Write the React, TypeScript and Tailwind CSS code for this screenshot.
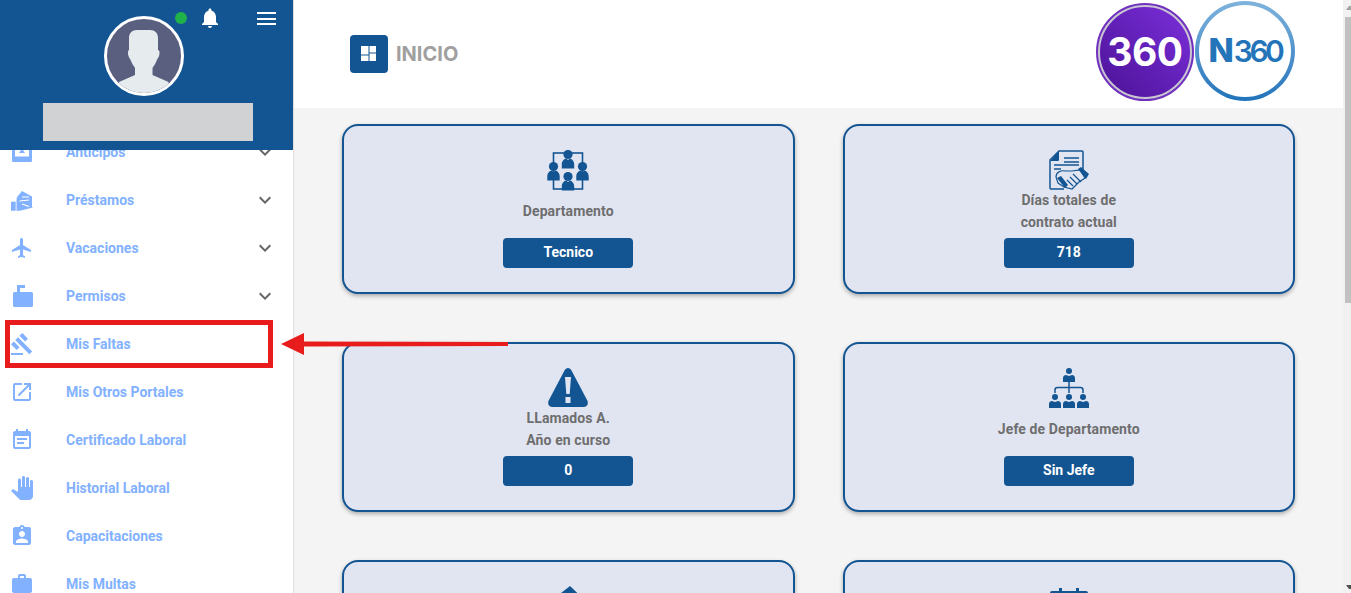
import React from "react";
import { MdExpandMore, MdFlight, MdGavel, MdOpenInNew, MdEventNote, MdPanTool, MdAssignmentInd, MdWork, MdNotifications } from "react-icons/md";

const blue = "#135592";
const cardBg = "#e1e5f2";

const PhotoIcon = () => (
  <svg viewBox="0 0 24 24" width="24" height="24" fill="#82b1ff">
    <path fillRule="evenodd" d="M3.500 2h17A1.500 1.500 0 0 1 22 3.500v17a1.500 1.500 0 0 1-1.500 1.500h-17A1.500 1.500 0 0 1 2 20.500v-17A1.500 1.500 0 0 1 3.500 2zM5 5v11.500h14V5H5zm7 3.500 3 4.500H9z" />
  </svg>
);
const LoanIcon = () => (
  <svg viewBox="0 0 24 24" width="24" height="24" fill="#82b1ff">
    <path d="M1 13.700h4.700v9H1z" />
    <path d="M7 9 12 3l10 5.500V19l1 .5-13 3.200H6.500V12z" />
    <path d="M12 9h7M9.500 13l9.500-1M12 16l7 2.500" stroke="#ffffff" strokeWidth="1.200" fill="none" />
  </svg>
);
const TabCase = () => (
  <svg viewBox="0 0 24 24" width="24" height="24" fill="#82b1ff">
    <path d="M7 1h8v3h-5v4h11.500A1.500 1.500 0 0 1 23 9.500v12a1.500 1.500 0 0 1-1.500 1.500h-17A1.500 1.500 0 0 1 3 21.500v-12A1.500 1.500 0 0 1 4.500 8H7z" />
  </svg>
);

type Item = { label: string; icon: React.ReactNode; more?: boolean };
const ic = "text-[24px]";
const items: Item[] = [
  { label: "Anticipos", icon: <PhotoIcon />, more: true },
  { label: "Préstamos", icon: <LoanIcon />, more: true },
  { label: "Vacaciones", icon: <MdFlight className={ic} />, more: true },
  { label: "Permisos", icon: <TabCase />, more: true },
  { label: "Mis Faltas", icon: <MdGavel className={ic} /> },
  { label: "Mis Otros Portales", icon: <MdOpenInNew className={ic} /> },
  { label: "Certificado Laboral", icon: <MdEventNote className={ic} /> },
  { label: "Historial Laboral", icon: <MdPanTool className={ic} /> },
  { label: "Capacitaciones", icon: <MdAssignmentInd className={ic} /> },
  { label: "Mis Multas", icon: <MdWork className={ic} /> },
];

const Person = ({ x, y }: { x: number; y: number }) => (
  <g transform={`translate(${x} ${y})`}>
    <circle cx="0" cy="0" r="4.600" />
    <path d="M-6.200 14V10C-6.200 6-3.500 4.500-2 4L0 5.500 2 4c1.500.5 4.200 2 4.200 6v4z" />
  </g>
);

const DeptIcon = () => (
  <svg width="42" height="42" viewBox="0 0 42 42" fill={blue}>
    <rect x="6.500" y="3" width="29" height="36" fill="none" stroke={blue} strokeWidth="1.600" />
    <Person x={21} y={4.500} />
    <Person x={6.500} y={16.500} />
    <Person x={35.500} y={16.500} />
    <Person x={21} y={26.500} />
  </svg>
);
const DocIcon = () => (
  <svg width="42" height="42" viewBox="0 0 42 42">
    <path d="M35 20V2a1 1 0 0 0-1-1H11L2 10v28a1 1 0 0 0 1 1h13" fill="none" stroke={blue} strokeWidth="1.500" />
    <path d="M2 11h8a1 1 0 0 0 1-1V1z" fill={blue} />
    <path d="M16 8h15M16 12h15M6 15h25M6 19h7" stroke={blue} strokeWidth="1.500" />
    <path d="M8 27c0-5 5-7 10-6l6 0 8-1 5 8-6 4-7 7-8-2-6-4z" fill={cardBg} stroke={blue} strokeWidth="1.200" />
    <path d="M30 19l3-2 8 7-3 5z" fill={blue} />
    <path d="M9 28l4-2 7 9-3 3z" fill={blue} />
    <path d="M22 27l7 7M19 30l6 6M25 24l8 8" stroke={blue} strokeWidth="1.200" fill="none" />
  </svg>
);
const WarnIcon = () => (
  <svg width="42" height="42" viewBox="0 0 42 42">
    <path d="M21 0c1.500 0 2.700 1 3.500 2.500l15.800 30c1.500 3.200-.3 6.500-3.500 6.500H5.200c-3.200 0-5-3.300-3.500-6.500l15.800-30C18.300 1 19.500 0 21 0z" fill={blue} />
    <path d="M18 9h6l-1.300 17h-3.400zM18.500 29h5v6h-5z" fill={cardBg} />
  </svg>
);
const OrgIcon = () => (
  <svg width="42" height="42" viewBox="0 0 42 42" fill={blue}>
    <circle cx="21" cy="3" r="3" />
    <path d="M15 14V10c0-2 1.500-3 3-3l3 1 3-1c1.500 0 3 1 3 3v4z" />
    <path d="M21 14v11M7 25v-3c0-2 1-2.500 2.500-2.500h23c1.500 0 2.500.5 2.500 2.500v3" fill="none" stroke={blue} strokeWidth="1.500" />
    <circle cx="7" cy="29" r="3" />
    <circle cx="21" cy="29" r="3" />
    <circle cx="35" cy="29" r="3" />
    <path d="M1 40v-4c0-2 1.500-3 3-3l3 1 3-1c1.500 0 3 1 3 3v4zM15 40v-4c0-2 1.500-3 3-3l3 1 3-1c1.500 0 3 1 3 3v4zM29 40v-4c0-2 1.500-3 3-3l3 1 3-1c1.500 0 3 1 3 3v4z" />
  </svg>
);
const HouseIcon = () => (
  <svg width="42" height="42" viewBox="0 0 42 42" fill={blue}>
    <path d="M23 0 42 18H0z" />
    <rect x="6" y="18" width="30" height="22" />
  </svg>
);
const CalIcon = () => (
  <svg width="42" height="42" viewBox="0 0 42 42" fill={blue}>
    <rect x="11" y="2" width="3" height="6" />
    <rect x="28" y="2" width="3" height="6" />
    <rect x="2" y="5" width="38" height="35" rx="2" />
  </svg>
);
const WindowIcon = () => (
  <svg width="16" height="16" viewBox="0 0 16 16" fill="#ffffff">
    <path d="M0 0h7.500v8.500H0zM0 9.500h7.500V15H0zM8.500 0H15v6.500H8.500zM8.500 7.500H15V15H8.500z" />
  </svg>
);

const Card = ({ icon, label, value }: { icon: React.ReactNode; label?: React.ReactNode; value?: string }) => (
  <div className="h-[170px] rounded-[16px] border-2 border-[#135592] bg-[#e1e5f2] shadow-[0_2px_4px_rgba(0,0,0,0.3)] pt-[24px] flex flex-col items-center">
    <div className="h-[39px] flex items-start justify-center">{icon}</div>
    <div className="h-[44px] flex items-center text-center text-[14px] leading-[22px] font-bold tracking-[0.1px] text-[#6e6e6e]">
      {label && <div>{label}</div>}
    </div>
    <div className="mt-[5px] w-[130px] h-[30px] rounded-[4px] bg-[#135592] text-white text-[14px] font-bold flex items-center justify-center pb-[2px]">
      {value}
    </div>
  </div>
);

export default function App() {
  return (
    <div className="relative flex h-[593px] w-[1351px] overflow-hidden bg-white font-['Roboto',sans-serif]">
      <aside className="w-[294px] h-full shrink-0 border-r border-[#dedede] bg-white overflow-hidden">
        <div className="relative z-10 h-[150px] bg-[#135592]">
          <div className="w-[80px] h-[80px] rounded-full border-[3px] border-white bg-[#5a5f80] overflow-hidden absolute left-[104px] top-[16px]">
            <svg viewBox="0 0 74 74" width="74" height="74">
              <path d="M22 19c0-5 3-8 8-8h13c5 0 8 3 8 8v12c1 0 1.500 1 1.500 3 0 4-2 5-3 8-1 3-3 5-4 7v7l16 7v12H12V63l16-7v-7c-1-2-3-4-4-7-1-3-3-4-3-8 0-2 .5-3 1-3z" fill="#e6ecee" />
            </svg>
          </div>
          <span className="absolute left-[175px] top-[12px] w-[12px] h-[12px] rounded-full bg-[#21b14b]" />
          <MdNotifications className="absolute left-[198px] top-[6px] text-white text-[24px]" />
          <div className="absolute left-[257px] top-[12px] w-[19px] flex flex-col gap-[3.500px]">
            <span className="h-[2px] bg-white" />
            <span className="h-[2px] bg-white" />
            <span className="h-[2px] bg-white" />
          </div>
          <div className="absolute left-[43px] top-[103px] w-[210px] h-[38px] bg-[#d1d2d4]" />
        </div>
        <nav className="-mt-[22px]">
          {items.map((it) => (
            <div key={it.label} className="h-12 flex items-center text-[#82b1ff]">
              <div className="w-[44px] pl-[10px] flex items-center justify-start shrink-0 [&>svg]:block">{it.icon}</div>
              <span className="ml-[22px] text-[14px] font-bold flex-1">{it.label}</span>
              {it.more && <MdExpandMore className="text-[#666666] text-[24px] mr-[16px]" />}
            </div>
          ))}
        </nav>
      </aside>

      <main className="flex-1 h-full bg-[#f4f4f4] overflow-hidden">
        <header className="h-[108px] bg-white flex items-start justify-between pl-[56px] pr-[48px]">
          <div className="flex items-center mt-[35px]">
            <div className="w-[38px] h-[38px] rounded-[4px] bg-[#135592] flex items-center justify-center">
              <WindowIcon />
            </div>
            <span className="ml-[8px] font-['Inter',sans-serif] font-bold text-[20px] text-[#a0a0a0]">INICIO</span>
          </div>
          <div className="flex items-end mt-[1px]">
            <div className="w-[98px] h-[98px] rounded-full bg-gradient-to-tr from-[#4b1196] to-[#7c2fdc] border-2 border-[#7030c0] outline-2 outline-offset-[-4px] outline-[#c9c6d2] flex items-center justify-center">
              <span className="font-['Inter',sans-serif] font-bold text-[39px] tracking-[-0.5px] text-white">360</span>
            </div>
            <div className="w-[100px] h-[100px] ml-[1px] rounded-full bg-gradient-to-b from-[#7fb3dc] to-[#1f74bb] p-[4px]">
              <div className="w-full h-full rounded-full bg-white flex items-center justify-center font-['Inter',sans-serif] text-[#2474b9]">
                <span className="font-extrabold text-[33px]">N</span>
                <span className="font-semibold text-[30px] tracking-[-3.500px]">360</span>
              </div>
            </div>
          </div>
        </header>
        <section className="grid grid-cols-2 gap-12 px-12 pt-4">
          <Card icon={<DeptIcon />} label="Departamento" value="Tecnico" />
          <Card icon={<DocIcon />} label={<>Días totales de<br />contrato actual</>} value="718" />
          <Card icon={<WarnIcon />} label={<>LLamados A.<br />Año en curso</>} value="0" />
          <Card icon={<OrgIcon />} label="Jefe de Departamento" value="Sin Jefe" />
          <Card icon={<HouseIcon />} />
          <Card icon={<CalIcon />} />
        </section>
      </main>

      <div className="relative w-2 h-full shrink-0 bg-[#f1f1f1] pl-[2px] pt-[17px]">
        <div className="h-[286px] bg-[#c1c1c1]" />
        <svg className="absolute right-0 top-[6px]" width="5" height="4" viewBox="0 0 5 4"><path d="M3 0 0 4h5V0z" fill="#a3a3a3" /></svg>
        <svg className="absolute right-0 bottom-[4px]" width="5" height="4" viewBox="0 0 5 4"><path d="M0 0h5v4H3z" fill="#505050" /></svg>
      </div>

      <div className="absolute left-[5px] top-[320px] w-[268px] h-[48px] border-[5px] border-[#e81c1c]" />
      <svg className="absolute left-[278px] top-[329px]" width="232" height="30" viewBox="0 0 232 30">
        <path d="M3 15 26 4v8.500L230 13v4L26 17.500V26z" fill="#e81c1c" />
      </svg>
    </div>
  );
}
